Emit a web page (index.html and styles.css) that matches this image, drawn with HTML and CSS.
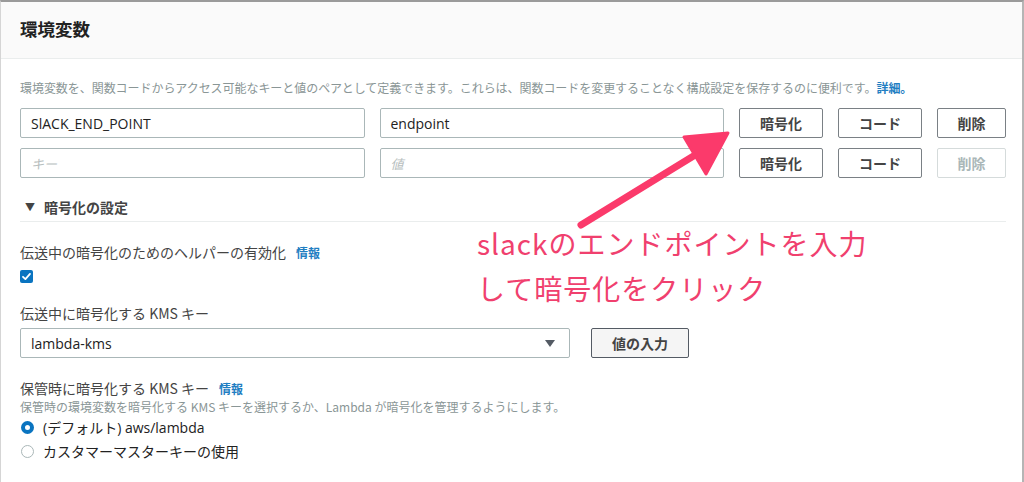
FILE: index.html
```html
<!DOCTYPE html>
<html lang="ja">
<head>
<meta charset="utf-8">
<title>環境変数</title>
<link rel="stylesheet" href="styles.css">
</head>
<body>
<div class="panel">
  <div class="panel-header"><h2 class="panel-title">環境変数</h2></div>
  <div class="panel-body">
    <p class="desc">環境変数を、関数コードからアクセス可能なキーと値のペアとして定義できます。これらは、関数コードを変更することなく構成設定を保存するのに便利です。<a class="link" href="#">詳細。</a></p>
    <div class="env-grid">
      <div class="input">SlACK_END_POINT</div>
      <div class="input">endpoint</div>
      <button class="btn">暗号化</button>
      <button class="btn">コード</button>
      <button class="btn">削除</button>
      <div class="input placeholder">キー</div>
      <div class="input placeholder">値</div>
      <button class="btn">暗号化</button>
      <button class="btn">コード</button>
      <button class="btn disabled">削除</button>
    </div>
    <div class="toggle"><span class="caret">▼</span>暗号化の設定</div>
    <div class="divider"></div>
    <div class="field helper">
      <div class="label">伝送中の暗号化のためのヘルパーの有効化<a class="info" href="#">情報</a></div>
      <span class="checkbox"><svg viewBox="0 0 13 13" width="13" height="13"><path d="M3 6.8 L5.4 9.1 L10 3.9" fill="none" stroke="#fff" stroke-width="1.8" stroke-linecap="round" stroke-linejoin="round"/></svg></span>
    </div>
    <div class="field kms">
      <div class="label">伝送中に暗号化する KMS キー</div>
      <div class="select-row">
        <div class="select">lambda-kms<span class="select-caret"></span></div>
        <button class="btn btn-fill">値の入力</button>
      </div>
    </div>
    <div class="field rest">
      <div class="label">保管時に暗号化する KMS キー<a class="info" href="#">情報</a></div>
      <div class="sub">保管時の環境変数を暗号化する KMS キーを選択するか、Lambda が暗号化を管理するようにします。</div>
      <div class="radio-row"><span class="radio checked"></span>(デフォルト) aws/lambda</div>
      <div class="radio-row"><span class="radio"></span>カスタマーマスターキーの使用</div>
    </div>
  </div>
</div>
<svg class="arrow" width="1024" height="482" viewBox="0 0 1024 482">
  <line x1="581" y1="225" x2="700" y2="152" stroke="#fb3a6b" stroke-width="7" stroke-linecap="round"/>
  <polygon points="728,133 684,137 706,174" fill="#fb3a6b" stroke="#fb3a6b" stroke-width="3" stroke-linejoin="round"/>
</svg>
<div class="note">
  <div class="note-line">slackのエンドポイントを入力</div>
  <div class="note-line">して暗号化をクリック</div>
</div>
</body>
</html>
```
FILE: styles.css
```css
* { box-sizing: border-box; }
html, body { margin: 0; padding: 0; background: #fff; }
body {
  font-family: "Open Sans", "Noto Sans CJK JP", sans-serif;
  color: #444;
  width: 1024px;
  height: 482px;
  overflow: hidden;
  position: relative;
}
.panel {
  border-top: 2px solid #9a9a9a;
  border-left: 1px solid #d5d5d5;
  border-right: 2px solid #b5b5b5;
  height: 482px;
}
.panel-header {
  background: #fafafa;
  border-bottom: 1px solid #eaeded;
  height: 57px;
  padding-left: 19px;
  padding-bottom: 4px;
  display: flex;
  align-items: center;
}
.panel-title {
  margin: 0;
  font-size: 17.5px;
  font-weight: 700;
  color: #222;
  font-family: "Noto Sans CJK JP", sans-serif;
}
.panel-body {
  padding: 21px 16px 0 19px;
}
.desc {
  margin: 0;
  font-size: 12px;
  line-height: 16px;
  color: #8a9696;
  font-family: "Noto Sans CJK JP", sans-serif;
  white-space: nowrap;
  letter-spacing: -0.05px;
}
.link, .info {
  color: #1f7ec2;
  text-decoration: none;
  font-weight: 700;
}
.env-grid {
  margin-top: 12px;
  display: grid;
  grid-template-columns: 1fr 1fr 84px 84px 69px;
  column-gap: 15px;
  row-gap: 10px;
}
.input {
  height: 30px;
  border: 1px solid #aab7b8;
  border-radius: 2px;
  padding-left: 10px;
  display: flex;
  align-items: center;
  font-size: 14px;
  color: #222;
}
.placeholder {
  color: #b8c0c0;
  font-style: italic;
  font-family: "Noto Sans CJK JP", sans-serif;
  font-size: 13px;
}
.btn {
  height: 30px;
  border: 1px solid #7a8085;
  border-radius: 2px;
  background: #fff;
  font-family: "Noto Sans CJK JP", sans-serif;
  font-size: 14px;
  font-weight: 700;
  color: #444;
  padding: 0;
}
.btn.disabled {
  border-color: #d5dbdb;
  color: #aab7b8;
}
.toggle {
  margin-top: 19px;
  padding-left: 5px;
  font-family: "Noto Sans CJK JP", sans-serif;
  font-size: 14px;
  font-weight: 700;
  line-height: 20px;
  color: #444;
  display: flex;
  align-items: center;
}
.caret {
  font-size: 10px;
  margin-right: 9px;
  color: #444;
}
.divider {
  margin-top: 4px;
  height: 1px;
  background: #eaeded;
}
.label {
  font-family: "Noto Sans CJK JP", sans-serif;
  font-size: 14px;
  line-height: 20px;
  color: #444;
}
.info {
  font-size: 12px;
  margin-left: 10px;
}
.helper { margin-top: 20px; }
.checkbox {
  display: block;
  margin-top: 7px;
  width: 13px;
  height: 13px;
  border-radius: 2px;
  background: #0a74c0;
}
.checkbox svg { display: block; }
.kms { margin-top: 20px; }
.select-row {
  margin-top: 5px;
  display: flex;
  gap: 21px;
}
.select {
  width: 550px;
  height: 30px;
  border: 1px solid #aab7b8;
  border-radius: 2px;
  padding-left: 10px;
  display: flex;
  align-items: center;
  justify-content: space-between;
  font-size: 14px;
  color: #222;
  padding-right: 14px;
}
.select-caret {
  width: 0;
  height: 0;
  border-left: 5px solid transparent;
  border-right: 5px solid transparent;
  border-top: 7px solid #545b64;
}
.btn-fill {
  width: 98px;
  background: #f5f5f5;
  border-color: #545b64;
}
.rest { margin-top: 20px; }
.sub {
  font-family: "Noto Sans CJK JP", sans-serif;
  font-size: 12px;
  line-height: 16px;
  color: #8a9696;
  white-space: nowrap;
}
.radio-row {
  display: flex;
  align-items: center;
  height: 24px;
  font-family: "Open Sans", "Noto Sans CJK JP", sans-serif;
  font-size: 14px;
  color: #222;
}
.radio {
  width: 13px;
  height: 13px;
  border-radius: 50%;
  border: 1px solid #aab7b8;
  margin: 0 9px 0 1px;
  flex: none;
}
.radio.checked {
  border: 4px solid #0a74c0;
  background: #fff;
}
.arrow {
  position: absolute;
  left: 0;
  top: 0;
  pointer-events: none;
}
.note {
  position: absolute;
  left: 477px;
  top: 221px;
  color: #f0406e;
  font-family: "Noto Sans CJK JP", sans-serif;
  font-size: 28px;
  line-height: 45px;
  letter-spacing: 1px;
}
```
